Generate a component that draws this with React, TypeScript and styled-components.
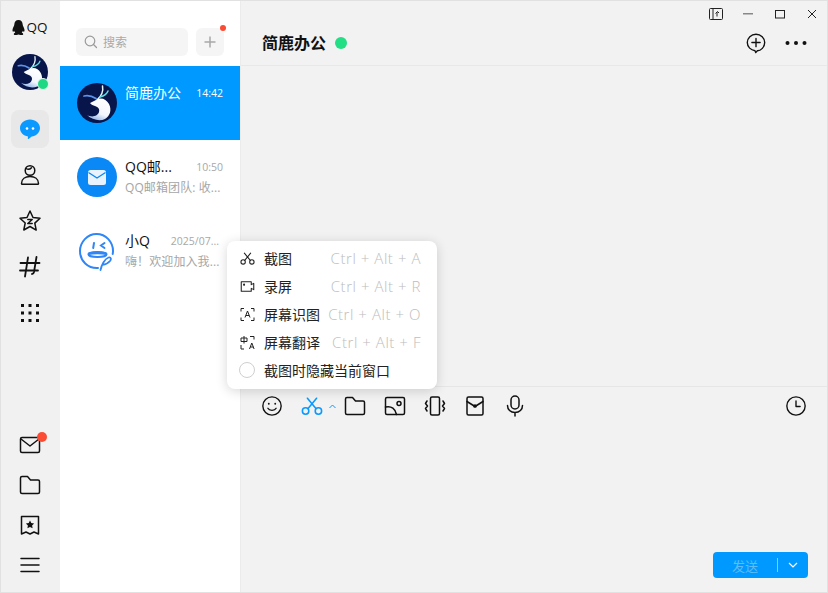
import React from 'react';
import styled, { createGlobalStyle } from 'styled-components';

const GlobalStyle = createGlobalStyle`
  html, body {
    margin: 0;
    padding: 0;
    height: 100%;
    overflow: hidden;
    background: #f2f2f2;
  }
  * {
    box-sizing: border-box;
  }
  #root {
    height: 100%;
  }
`;

const FONT = `"Open Sans", "Noto Sans CJK SC", sans-serif`;

const Window = styled.div`
  position: relative;
  width: 828px;
  height: 593px;
  display: flex;
  border: 1px solid #e1e1e1;
  font-family: ${FONT};
  color: #111;
  overflow: hidden;
`;

const Sidebar = styled.nav`
  width: 59px;
  flex: none;
  background: #f1f1f1;
  padding-right: 1px;
  display: flex;
  flex-direction: column;
  align-items: center;
`;

const Logo = styled.div`
  margin-top: 18px;
  height: 17px;
  display: flex;
  align-items: center;
  gap: 1px;
  font-size: 13.5px;
  line-height: 17px;
  color: #111;
`;

const UserAvatar = styled.div`
  position: relative;
  width: 36px;
  height: 36px;
  margin-top: 18px;
`;

const OnlineDot = styled.span`
  position: absolute;
  right: -1px;
  bottom: 0;
  width: 12px;
  height: 12px;
  border-radius: 50%;
  background: #1fd883;
  border: 1px solid #e9f7f0;
`;

const NavGroup = styled.div`
  margin-top: 20px;
  display: flex;
  flex-direction: column;
  align-items: center;
  gap: 8px;
`;

const NavItem = styled.div<{ $active?: boolean }>`
  width: 38px;
  height: 38px;
  border-radius: 8px;
  display: flex;
  align-items: center;
  justify-content: center;
  background: ${p => (p.$active ? '#e8e8e8' : 'transparent')};
`;

const BottomGroup = styled.div`
  margin-top: auto;
  margin-bottom: 12px;
  display: flex;
  flex-direction: column;
  align-items: center;
  gap: 10px;
`;

const BottomItem = styled.div`
  position: relative;
  width: 30px;
  height: 30px;
  display: flex;
  align-items: center;
  justify-content: center;
`;

const RedBadge = styled.span`
  position: absolute;
  top: 2px;
  right: -2px;
  width: 10px;
  height: 10px;
  border-radius: 50%;
  background: #fb4b32;
`;

const ListPanel = styled.section`
  width: 181px;
  flex: none;
  background: #fff;
  border-right: 1px solid #ebebeb;
  display: flex;
  flex-direction: column;
`;

const SearchRow = styled.div`
  height: 65px;
  padding: 27px 16px 0 16px;
  display: flex;
  gap: 8px;
`;

const SearchBox = styled.div`
  width: 112px;
  height: 28px;
  border-radius: 6px;
  background: #f5f5f5;
  display: flex;
  align-items: center;
  gap: 5px;
  padding-left: 8px;
  font-size: 12px;
  color: #a9a9a9;
`;

const PlusBox = styled.div`
  position: relative;
  width: 28px;
  height: 28px;
  border-radius: 6px;
  background: #f5f5f5;
  display: flex;
  align-items: center;
  justify-content: center;
`;

const PlusDot = styled.span`
  position: absolute;
  top: -3px;
  right: -2px;
  width: 6px;
  height: 6px;
  border-radius: 50%;
  background: #fb4b32;
`;

const ChatRow = styled.div<{ $active?: boolean }>`
  height: 74px;
  padding: 17px 17px 0 17px;
  display: flex;
  gap: 8px;
  background: ${p => (p.$active ? '#0099ff' : 'transparent')};
`;

const ChatIcon = styled.div`
  width: 40px;
  height: 40px;
  flex: none;
`;

const ChatBody = styled.div`
  flex: 1;
  min-width: 0;
`;

const ChatTop = styled.div`
  display: flex;
  justify-content: space-between;
  align-items: center;
  height: 20px;
`;

const ChatName = styled.span<{ $active?: boolean }>`
  font-size: 14px;
  line-height: 20px;
  color: ${p => (p.$active ? '#fff' : '#111')};
`;

const ChatTime = styled.span<{ $active?: boolean; $long?: boolean }>`
  font-size: 10.5px;
  margin-right: ${p => (p.$long ? '4px' : '0')};
  color: ${p => (p.$active ? '#fff' : '#a8a8a8')};
`;

const ChatPreview = styled.div`
  margin-top: 2px;
  font-size: 12px;
  line-height: 18px;
  letter-spacing: 0.1px;
  color: #a6a6a6;
  white-space: nowrap;
`;

const MainPanel = styled.main`
  flex: 1;
  min-width: 0;
  background: #f2f2f2;
  display: flex;
  flex-direction: column;
`;

const TopArea = styled.header`
  height: 65px;
  flex: none;
  border-bottom: 1px solid #e8e8e8;
  display: flex;
  flex-direction: column;
`;

const WindowControls = styled.div`
  height: 27px;
  padding: 4px 7px 0 0;
  display: flex;
  justify-content: flex-end;
  gap: 16px;
`;

const ControlBtn = styled.div`
  width: 16px;
  height: 18px;
  display: flex;
  align-items: center;
  justify-content: center;
`;

const ConversationBar = styled.div`
  flex: 1;
  display: flex;
  align-items: center;
  padding: 0 20px 8px 21px;
`;

const ConversationTitle = styled.h1`
  margin: 0;
  font-size: 16px;
  line-height: 24px;
  font-weight: 700;
  color: #111;
`;

const TitleDot = styled.span`
  width: 12px;
  height: 12px;
  margin-left: 9px;
  border-radius: 50%;
  background: #22de85;
`;

const BarActions = styled.div`
  margin-left: auto;
  display: flex;
  align-items: center;
  gap: 18px;
`;

const MessageArea = styled.div`
  height: 321px;
  flex: none;
  border-bottom: 1px solid #e6e6e6;
`;

const Toolbar = styled.div`
  height: 38px;
  flex: none;
  display: flex;
  align-items: center;
  padding: 0 19px;
  gap: 16px;
`;

const ToolButton = styled.div<{ $wide?: boolean }>`
  width: ${p => (p.$wide ? '36px' : '24px')};
  margin-right: ${p => (p.$wide ? '-9px' : '0')};
  padding-left: ${p => (p.$wide ? '1px' : '0')};
  height: 24px;
  display: flex;
  align-items: center;
  justify-content: ${p => (p.$wide ? 'space-between' : 'center')};
`;

const ToolSpacer = styled.div`
  flex: 1;
`;

const InputArea = styled.div`
  flex: 1;
  display: flex;
  align-items: flex-end;
  justify-content: flex-end;
  padding: 0 19px 14px 0;
`;

const SendButton = styled.div`
  width: 95px;
  height: 26px;
  border-radius: 4px;
  background: #0099ff;
  display: flex;
  align-items: center;
`;

const SendLabel = styled.span`
  width: 64px;
  text-align: center;
  font-size: 13px;
  color: #5cbdf6;
`;

const SendDivider = styled.span`
  width: 1px;
  height: 14px;
  background: #80ccff;
`;

const SendArrow = styled.span`
  flex: 1;
  display: flex;
  align-items: center;
  justify-content: center;
`;

const PopupMenu = styled.div`
  position: absolute;
  left: 226px;
  top: 240px;
  width: 210px;
  height: 148px;
  padding: 3px 16px 4px 12px;
  background: #fff;
  border-radius: 8px;
  box-shadow: 0 2px 12px rgba(0, 0, 0, 0.16);
`;

const MenuRow = styled.div`
  height: 28px;
  display: flex;
  align-items: center;
`;

const MenuIcon = styled.span`
  width: 16px;
  height: 16px;
  flex: none;
  display: flex;
  align-items: center;
  justify-content: center;
  margin-right: 9px;
`;

const MenuLabel = styled.span`
  font-size: 14px;
  color: #222;
  white-space: nowrap;
`;

const MenuShortcut = styled.span`
  margin-left: auto;
  font-size: 15px;
  font-weight: 300;
  letter-spacing: 0.55px;
  color: #bdbdbd;
  white-space: nowrap;
`;

const RadioCircle = styled.span`
  width: 16px;
  height: 16px;
  border-radius: 50%;
  border: 1px solid #cfcfcf;
`;

const Ink: React.FC<{ size?: number; box?: number; color?: string; width?: number; children: React.ReactNode }> = ({
  size = 24,
  box = 24,
  color = '#111',
  width = 1.5,
  children,
}) => (
  <svg
    width={size}
    height={size}
    viewBox={`0 0 ${box} ${box}`}
    fill="none"
    stroke={color}
    strokeWidth={width}
    strokeLinecap="round"
    strokeLinejoin="round"
  >
    {children}
  </svg>
);

const DeerAvatar: React.FC<{ size: number }> = ({ size }) => (
  <svg width={size} height={size} viewBox="0 0 40 40">
    <defs>
      <linearGradient id="deerBody" x1="0.7" y1="0" x2="0.3" y2="1">
        <stop offset="0" stopColor="#ffffff" />
        <stop offset="0.65" stopColor="#f2f6fd" />
        <stop offset="1" stopColor="#8fb2e6" />
      </linearGradient>
    </defs>
    <circle cx="20" cy="20" r="20" fill="#07154a" />
    <path d="M25.500 3c1 5-1 10-5.500 14" stroke="#e6f6fa" strokeWidth="1.500" fill="none" strokeLinecap="round" />
    <path d="M31 8c-1 3-4 5-8 6" stroke="#5fdcdc" strokeWidth="1.500" fill="none" strokeLinecap="round" />
    <path d="M7 13c4-1 8 0 12 2.500" stroke="#5b93e8" strokeWidth="1.800" fill="none" strokeLinecap="round" />
    <path
      d="M13 20L19 17C24 14 29 16 32 21C35 27 33 33 28 36C23 38.500 15 37 10 32C15 35 21 33 22 29C23 26 21 24 18 23C16 22.500 14.500 22 13 20Z"
      fill="url(#deerBody)"
    />
  </svg>
);

const MailAvatar = () => (
  <svg width="40" height="40" viewBox="0 0 40 40">
    <circle cx="20" cy="20" r="20" fill="#0a88f5" />
    <rect x="11" y="13" width="18" height="15" rx="2.500" fill="#e8f3fe" />
    <path d="M11.500 15.500l8.500 5.500 8.500-5.500" fill="none" stroke="#0a88f5" strokeWidth="1.300" />
  </svg>
);

const RobotAvatar = () => (
  <svg width="40" height="40" viewBox="0 0 40 40" fill="none" stroke="#2f86f6" strokeWidth="2" strokeLinecap="round">
    <path d="M21 37C11 37.500 3 30 3 20 3 11 10.500 3 19.500 3 29 3 36 11 36 20c0 1-.1 2-.3 3" />
    <path d="M17 12l-.8 5M27.500 12l-3.500 2.500 3.500 2.500" />
    <ellipse cx="20.500" cy="23.500" rx="9" ry="2.500" />
    <path d="M12 22.800c3-1.300 14-1.300 17 0" strokeWidth="2.600" />
    <path d="M23.500 39c1-5 4-11 8-12.500 2.500-.8 3 1.500 1.500 3.500-2 2.500-5 3.500-7.500 3.800" strokeWidth="1.800" />
  </svg>
);

const PenguinLogo = () => (
  <svg width="13" height="16" viewBox="0 0 13 16">
    <path
      d="M6.500 0C3.800 0 2.400 2 2.300 4.500 2.200 6 1 7.500.6 9.300c-.3 1.400 0 2.400.5 2.500.4 0 .8-.6 1-1 .2.800.6 1.500 1.200 2-1 .3-1.600.8-1.500 1.400.1.800 1.500.9 2.700.8 1-.1 1.600-.5 2-.5s1 .4 2 .5c1.200.1 2.600 0 2.700-.8.100-.6-.5-1.100-1.500-1.400.6-.5 1-1.200 1.200-2 .2.400.6 1 1 1 .5-.1.800-1.100.5-2.500C12 7.500 10.800 6 10.700 4.500 10.600 2 9.200 0 6.500 0z"
      fill="#111"
    />
  </svg>
);

const ChatBubble = () => (
  <svg width="22" height="22" viewBox="0 0 22 22">
    <path
      d="M11 1.500c5.600 0 10 3.700 10 8.500s-4.400 8.400-8.300 8.500L9.600 21c-.4.300-.9 0-.8-.5l.2-2C4.500 17.800 1 14.500 1 10c0-4.800 4.400-8.500 10-8.500z"
      fill="#0a99ff"
    />
    <circle cx="8" cy="10.500" r="1.300" fill="#fff" />
    <circle cx="14" cy="10.500" r="1.300" fill="#fff" />
  </svg>
);

const ScissorsIcon: React.FC<{ size: number; color: string; width: number }> = ({ size, color, width }) => (
  <Ink size={size} color={color} width={width}>
    <circle cx="5" cy="17.500" r="3.500" />
    <circle cx="19" cy="17.500" r="3.500" />
    <path d="M7.500 15L17 3.500M16.500 15L7 3.500" />
  </Ink>
);

function App() {
  return (
    <Window>
      <GlobalStyle />
      <Sidebar>
        <Logo>
          <PenguinLogo />
          QQ
        </Logo>
        <UserAvatar>
          <DeerAvatar size={36} />
          <OnlineDot />
        </UserAvatar>
        <NavGroup>
          <NavItem $active>
            <ChatBubble />
          </NavItem>
          <NavItem>
            <Ink>
              <circle cx="12" cy="7.500" r="4.800" />
              <path d="M8 5.500c1.500 1 4 .8 5.500-.8" />
              <path d="M3.500 20.500c0-4.500 3.800-7 8.500-7s8.500 2.500 8.500 7c0 .5-.3.800-.8.800H4.300c-.5 0-.8-.3-.8-.8z" />
            </Ink>
          </NavItem>
          <NavItem>
            <Ink>
              <path d="M12 2l3 6.500 7 .8-5.200 4.800 1.400 7L12 17.500 5.800 21l1.400-7L2 9.300l7-.8z" />
              <path d="M9.800 10.500h4.400l-4.400 4h4.400" />
            </Ink>
          </NavItem>
          <NavItem>
            <Ink width={1.8}>
              <path d="M10 2.500L7 21.500M18.500 2L16 17c-.3 1.500-1 2-2 2M2.500 8h19M2 15.500h18" />
            </Ink>
          </NavItem>
          <NavItem>
            <svg width="20" height="20" viewBox="0 0 20 20" fill="#111">
              <rect x="1" y="1" width="3" height="3" />
              <rect x="8.500" y="1" width="3" height="3" />
              <rect x="16" y="1" width="3" height="3" />
              <rect x="1" y="8.500" width="3" height="3" />
              <rect x="8.500" y="8.500" width="3" height="3" />
              <rect x="16" y="8.500" width="3" height="3" />
              <rect x="1" y="16" width="3" height="3" />
              <rect x="8.500" y="16" width="3" height="3" />
              <rect x="16" y="16" width="3" height="3" />
            </svg>
          </NavItem>
        </NavGroup>
        <BottomGroup>
          <BottomItem>
            <Ink>
              <rect x="2.500" y="4.500" width="19" height="15" rx="1.500" />
              <path d="M3 6l9 7 9-7" />
            </Ink>
            <RedBadge />
          </BottomItem>
          <BottomItem>
            <Ink>
              <path d="M2.500 5c0-.8.6-1.500 1.500-1.500h5.500l3 3.500H20c.8 0 1.500.7 1.500 1.500V19c0 .8-.7 1.500-1.500 1.500H4c-.9 0-1.500-.7-1.500-1.500z" />
            </Ink>
          </BottomItem>
          <BottomItem>
            <Ink>
              <path d="M3.500 3.500h17v17.500L16 19l-4 2-4-2-4.500 2z" />
              <path d="M12 7.500l1.300 2.600 2.800.4-2 2 .5 2.800-2.600-1.300-2.600 1.300.5-2.800-2-2 2.800-.4z" fill="#111" stroke="none" />
            </Ink>
          </BottomItem>
          <BottomItem>
            <Ink>
              <path d="M3 5.500h18M3 12h18M3 18.500h18" />
            </Ink>
          </BottomItem>
        </BottomGroup>
      </Sidebar>

      <ListPanel>
        <SearchRow>
          <SearchBox>
            <svg width="14" height="14" viewBox="0 0 14 14" fill="none" stroke="#9a9a9a" strokeWidth="1.200" strokeLinecap="round">
              <circle cx="6" cy="6" r="4.800" />
              <path d="M9.500 9.500l3 3" />
            </svg>
            搜索
          </SearchBox>
          <PlusBox>
            <svg width="12" height="12" viewBox="0 0 12 12" stroke="#a8a8a8" strokeWidth="1.500">
              <path d="M6 .5v11M.5 6h11" />
            </svg>
            <PlusDot />
          </PlusBox>
        </SearchRow>
        <ChatRow $active>
          <ChatIcon>
            <DeerAvatar size={40} />
          </ChatIcon>
          <ChatBody>
            <ChatTop>
              <ChatName $active>简鹿办公</ChatName>
              <ChatTime $active>14:42</ChatTime>
            </ChatTop>
          </ChatBody>
        </ChatRow>
        <ChatRow>
          <ChatIcon>
            <MailAvatar />
          </ChatIcon>
          <ChatBody>
            <ChatTop>
              <ChatName>QQ邮...</ChatName>
              <ChatTime>10:50</ChatTime>
            </ChatTop>
            <ChatPreview>QQ邮箱团队: 收...</ChatPreview>
          </ChatBody>
        </ChatRow>
        <ChatRow>
          <ChatIcon>
            <RobotAvatar />
          </ChatIcon>
          <ChatBody>
            <ChatTop>
              <ChatName>小Q</ChatName>
              <ChatTime $long>2025/07...</ChatTime>
            </ChatTop>
            <ChatPreview>嗨！欢迎加入我...</ChatPreview>
          </ChatBody>
        </ChatRow>
      </ListPanel>

      <MainPanel>
        <TopArea>
          <WindowControls>
            <ControlBtn>
              <svg width="14" height="12" viewBox="0 0 14 12" fill="none" stroke="#222" strokeWidth="1">
                <rect x=".5" y=".5" width="13" height="11" rx="1" />
                <path d="M4 .5v11" />
                <path d="M8 8.500V4M6.500 5.500L8.500 3.500 10 5" />
              </svg>
            </ControlBtn>
            <ControlBtn>
              <svg width="10" height="2" viewBox="0 0 10 2">
                <rect width="10" height="1.500" fill="#888" />
              </svg>
            </ControlBtn>
            <ControlBtn>
              <svg width="10" height="9" viewBox="0 0 10 9" fill="none" stroke="#222" strokeWidth="1">
                <rect x=".5" y=".5" width="9" height="7.500" />
              </svg>
            </ControlBtn>
            <ControlBtn>
              <svg width="10" height="10" viewBox="0 0 10 10" stroke="#222" strokeWidth="1">
                <path d="M1 1l8 8M9 1l-8 8" />
              </svg>
            </ControlBtn>
          </WindowControls>
          <ConversationBar>
            <ConversationTitle>简鹿办公</ConversationTitle>
            <TitleDot />
            <BarActions>
              <Ink size={22}>
                <path d="M12 2.500c5.300 0 9.500 4 9.500 9s-4.200 9-8 9l-1.800 2-.8-2.100C6.500 19.800 2.500 16.500 2.500 11.500c0-5 4.200-9 9.500-9z" />
                <path d="M7.500 11.500h9M12 7v9" />
              </Ink>
              <svg width="22" height="6" viewBox="0 0 22 6" fill="#111">
                <circle cx="2.500" cy="3" r="2" />
                <circle cx="11" cy="3" r="2" />
                <circle cx="19.500" cy="3" r="2" />
              </svg>
            </BarActions>
          </ConversationBar>
        </TopArea>
        <MessageArea />
        <Toolbar>
          <ToolButton>
            <Ink size={22}>
              <circle cx="12" cy="12" r="10" />
              <circle cx="8.500" cy="9.500" r="1" fill="#111" stroke="none" />
              <circle cx="15.500" cy="9.500" r="1" fill="#111" stroke="none" />
              <path d="M7.500 14.500c1.500 3 7.500 3 9 0" />
            </Ink>
          </ToolButton>
          <ToolButton $wide>
            <ScissorsIcon size={22} color="#0a99ff" width={1.7} />
            <svg width="7" height="5" viewBox="0 0 7 5" fill="none" stroke="#0a99ff" strokeWidth="1">
              <path d="M.5 4L3.500 1 6.500 4" />
            </svg>
          </ToolButton>
          <ToolButton>
            <Ink>
              <path d="M2.500 5c0-.8.6-1.500 1.500-1.500h5.500l3 3.500H20c.8 0 1.500.7 1.500 1.500V19c0 .8-.7 1.500-1.500 1.500H4c-.9 0-1.500-.7-1.500-1.500z" />
            </Ink>
          </ToolButton>
          <ToolButton>
            <Ink>
              <rect x="2.500" y="3.500" width="19" height="17" rx="1.500" />
              <circle cx="16" cy="9.500" r="2" />
              <path d="M2.500 13c6-1.500 10 2 11 7.500" />
            </Ink>
          </ToolButton>
          <ToolButton>
            <Ink>
              <rect x="7.500" y="3" width="9" height="18" rx="1.500" />
              <path d="M4 7L2.500 9.500l2 2.500-2 2.500L4 17M20 7l1.500 2.500-2 2.500 2 2.500L20 17" />
            </Ink>
          </ToolButton>
          <ToolButton>
            <Ink>
              <rect x="4" y="3" width="16" height="18" rx="1.500" />
              <path d="M4 7.500l8 5 8-5" />
              <circle cx="12" cy="12" r="1.100" />
            </Ink>
          </ToolButton>
          <ToolButton>
            <Ink>
              <rect x="8" y="2" width="8" height="13" rx="4" />
              <path d="M4.500 11.500c0 4 3 7 7.500 7s7.500-3 7.500-7M12 18.500V22" />
            </Ink>
          </ToolButton>
          <ToolSpacer />
          <ToolButton>
            <Ink size={22}>
              <circle cx="12" cy="12" r="10" />
              <path d="M12 6.500V12.500H16.500" />
            </Ink>
          </ToolButton>
        </Toolbar>
        <InputArea>
          <SendButton>
            <SendLabel>发送</SendLabel>
            <SendDivider />
            <SendArrow>
              <svg width="10" height="6" viewBox="0 0 10 6" fill="none" stroke="#fff" strokeWidth="1.200">
                <path d="M1 1l4 4 4-4" />
              </svg>
            </SendArrow>
          </SendButton>
        </InputArea>
      </MainPanel>

      <PopupMenu>
        <MenuRow>
          <MenuIcon>
            <ScissorsIcon size={15} color="#222" width={1.7} />
          </MenuIcon>
          <MenuLabel>截图</MenuLabel>
          <MenuShortcut>Ctrl + Alt + A</MenuShortcut>
        </MenuRow>
        <MenuRow>
          <MenuIcon>
            <Ink size={15} color="#222" width={1.7}>
              <path d="M2 4.500h16v4.500l4-2v10l-4-2v4.500H2z" />
              <circle cx="6.500" cy="9" r=".8" fill="#222" />
            </Ink>
          </MenuIcon>
          <MenuLabel>录屏</MenuLabel>
          <MenuShortcut>Ctrl + Alt + R</MenuShortcut>
        </MenuRow>
        <MenuRow>
          <MenuIcon>
            <svg width="15" height="15" viewBox="0 0 15 15" fill="none" stroke="#222" strokeWidth="1">
              <path d="M1 4.500V1.500h3M11 1.500h3v3M1 10.500v3h3M11 13.500h3v-3" />
              <path d="M5 10.500L7.500 4 10 10.500M6 8.500h3" />
            </svg>
          </MenuIcon>
          <MenuLabel>屏幕识图</MenuLabel>
          <MenuShortcut>Ctrl + Alt + O</MenuShortcut>
        </MenuRow>
        <MenuRow>
          <MenuIcon>
            <svg width="15" height="15" viewBox="0 0 15 15" fill="none" stroke="#222" strokeWidth="1">
              <path d="M1 3h6v3.500H1zM4 1v7.500M1 10v4h3M9.500 14l2.300-6 2.300 6M10.300 12h3M10 1.500h4v3" />
            </svg>
          </MenuIcon>
          <MenuLabel>屏幕翻译</MenuLabel>
          <MenuShortcut>Ctrl + Alt + F</MenuShortcut>
        </MenuRow>
        <MenuRow>
          <MenuIcon>
            <RadioCircle />
          </MenuIcon>
          <MenuLabel>截图时隐藏当前窗口</MenuLabel>
        </MenuRow>
      </PopupMenu>
    </Window>
  );
}

export default App;
